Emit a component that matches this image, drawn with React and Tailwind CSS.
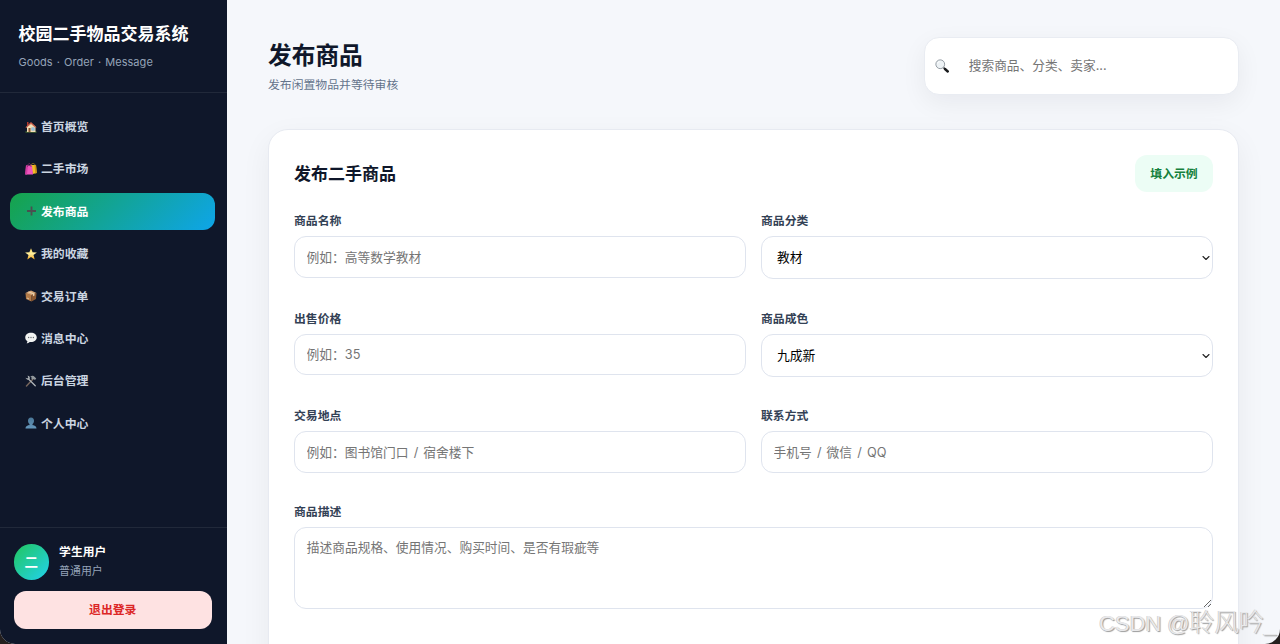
import React from "react";
import { ChevronDown } from "lucide-react";

function House() {
  return (
    <svg viewBox="0 0 24 24" className="h-3 w-3 shrink-0">
      <path d="M1 21h22v2H1z" fill="#5f8a35" />
      <path d="M4 11 12 4l9 7v11H4z" fill="#f3dfb6" />
      <path d="M4 2h3v7H4z" fill="#b5382c" />
      <path d="M1 12.500 12 2l11 10.500-1.500 1.500L12 6 2.500 14z" fill="#c9604c" />
      <path d="M7 14h4v8H7z" fill="#8a5330" />
      <path d="M13 13h6v6h-6z" fill="#5d9fcf" />
      <path d="M16 13v6M13 16h6" stroke="#fff" strokeWidth=".8" />
    </svg>
  );
}

function Bags() {
  return (
    <svg viewBox="0 0 24 24" className="h-3 w-3 shrink-0">
      <path d="M12 5c0-5 8-6 8 0" fill="none" stroke="#a58322" strokeWidth="1.500" />
      <path d="M11 4h11l1.500 16-8 2z" fill="#f3bd27" />
      <path d="m19 4 3 0 1.500 16-3 1z" fill="#ce9415" />
      <path d="M2 5h12l2 18H.5z" fill="#ef55bd" />
      <path d="M2 5h4L4 23H.5z" fill="#d23ba1" />
      <path d="M5 8c0-9 7-9 7 0" fill="none" stroke="#8c286d" strokeWidth="1.500" />
    </svg>
  );
}

function Plus() {
  return (
    <svg viewBox="0 0 24 24" className="h-3 w-3 shrink-0">
      <path d="M13 3v18M4 12h18" stroke="#4a4f50" strokeWidth="3.600" />
    </svg>
  );
}

function Star() {
  return (
    <svg viewBox="0 0 24 24" className="h-3 w-3 shrink-0">
      <defs>
        <linearGradient id="star" x1="0" y1="0" x2="0" y2="1">
          <stop offset="0" stopColor="#ffd95a" />
          <stop offset=".5" stopColor="#fff0a0" />
          <stop offset="1" stopColor="#f5a51b" />
        </linearGradient>
      </defs>
      <path d="m12 .3 3.200 8.100 8.600.4-6.800 5.400 2.400 8.600L12 18l-7.400 4.800L7 14.200.2 8.800l8.600-.4z" fill="url(#star)" />
    </svg>
  );
}

function Package() {
  return (
    <svg viewBox="0 0 24 24" className="h-3 w-3 shrink-0">
      <path d="m1 6 11-5 11 5-11 5z" fill="#d5a474" />
      <path d="m1 6 12 4v13L2 18z" fill="#b27a48" />
      <path d="m23 6-10 4v13l9-5z" fill="#8c5932" />
      <path d="m5 4 11 4.500v4l3-1.500V7L8 3z" fill="#e9cfac" />
      <path d="m4 15 4 2v2l-4-2z" fill="#dcc29f" />
    </svg>
  );
}

function Speech() {
  return (
    <svg viewBox="0 0 24 24" className="h-3 w-3 shrink-0">
      <path d="M12 1.500C5.500 1.500.5 5.500.5 11c0 3.200 1.700 5.800 4.300 7.300.1 1.700-.9 3-1.900 4.200 2.500 0 5-1 6.500-2.600 8 1 14.100-3 14.100-8.900 0-5.500-5-9.500-11.500-9.500z" fill="#f1f3f2" />
      <circle cx="7.300" cy="11" r="1.300" fill="#5f6669" />
      <circle cx="12" cy="11" r="1.300" fill="#5f6669" />
      <circle cx="16.700" cy="11" r="1.300" fill="#5f6669" />
    </svg>
  );
}

function Tools() {
  return (
    <svg viewBox="0 0 24 24" className="h-3 w-3 shrink-0">
      <path d="M15.500 8.500 3 22" stroke="#75655c" strokeWidth="3" strokeLinecap="round" />
      <path d="m7 8 13.500 13.500" stroke="#aeb3b7" strokeWidth="2.600" strokeLinecap="round" />
      <path d="M1 5.500 4.500 7 6.500 5 5 1.500c3-.5 5.500 2 4.500 5.500S4 11 1 5.500z" fill="#a8adb1" />
      <path d="M10.500 3.500C14 .5 17 1 19 3.500l3.500 3.500-2.500 3-3-2-2 1.500-2.500-2.500 1-2z" fill="#92989c" />
    </svg>
  );
}

function Person() {
  return (
    <svg viewBox="0 0 24 24" className="h-3 w-3 shrink-0">
      <defs>
        <linearGradient id="person" x1="0" y1="0" x2="0" y2="1">
          <stop offset="0" stopColor="#4b7898" />
          <stop offset="1" stopColor="#6598bd" />
        </linearGradient>
      </defs>
      <path d="M12 1c4 0 6 2.500 6 6.500 0 3-1.300 5.500-3 6.700v2c3 1 7.500 1.500 8 6.800H1c.5-5.300 5-5.800 8-6.800v-2c-1.700-1.200-3-3.700-3-6.700C6 3.500 8 1 12 1z" fill="url(#person)" />
    </svg>
  );
}

function Magnifier() {
  return (
    <svg viewBox="0 0 28 28" className="h-3.5 w-3.5 shrink-0">
      <path d="m17 17 3 3" stroke="#34383c" strokeWidth="3.500" />
      <path d="m20 20 5.500 5" stroke="#17191b" strokeWidth="4.800" strokeLinecap="round" />
      <circle cx="10.500" cy="10.500" r="8.800" fill="#edf2f5" stroke="#7d878f" strokeWidth="1.600" />
      <path d="M5 9c.5-2.500 2-4 4.500-4.300" fill="none" stroke="#fff" strokeWidth="1.500" />
    </svg>
  );
}

const navItems = [
  { label: "首页概览", Icon: House },
  { label: "二手市场", Icon: Bags },
  { label: "发布商品", Icon: Plus, active: true },
  { label: "我的收藏", Icon: Star },
  { label: "交易订单", Icon: Package },
  { label: "消息中心", Icon: Speech },
  { label: "后台管理", Icon: Tools },
  { label: "个人中心", Icon: Person },
];

function Sidebar() {
  return (
    <aside className="flex w-[227px] shrink-0 flex-col bg-[#0f172a]">
      <header className="h-[93px] border-b border-white/8 pt-[22px] pl-[18.5px]">
        <h1 className="text-[17px] leading-6 font-bold text-white">校园二手物品交易系统</h1>
        <p className="mt-2 text-[11px] leading-4 tracking-[0.05px] [word-spacing:0.9px] text-[#94a3b8]">Goods · Order · Message</p>
      </header>
      <nav className="flex flex-1 flex-col gap-[5.2px] pt-[15px] pr-3 pl-2.5">
        {navItems.map(({ label, Icon, active }) => (
          <a
            key={label}
            className={
              active
                ? "flex h-[37.2px] items-center gap-[3.5px] rounded-xl bg-linear-135/srgb from-[#16a34a] to-[#0ea5e9] pl-[15.4px] text-[11.9px] font-bold text-white"
                : "flex h-[37.2px] items-center gap-[3.5px] rounded-xl pl-[15.4px] text-[11.9px] font-bold text-[#cbd5e1]"
            }
          >
            <Icon />
            <span className="pt-[0.8px]">{label}</span>
          </a>
        ))}
      </nav>
      <footer className="h-[117px] border-t border-white/8 pt-[15.5px] pr-[15px] pl-[13.5px]">
        <div className="flex items-center gap-2.5">
          <div className="flex size-[35.6px] items-center justify-center rounded-full bg-linear-135/srgb from-[#22c55e] to-[#22d3ee] text-[13.5px] font-bold text-white">
            二
          </div>
          <div>
            <p className="text-[11.8px] leading-[19px] font-bold text-white">学生用户</p>
            <p className="text-[10.9px] leading-[19px] text-[#94a3b8]">普通用户</p>
          </div>
        </div>
        <button className="mt-[10.4px] block h-[37.4px] w-full rounded-xl bg-[#fee2e2] pt-0.5 text-[11.85px] font-bold text-[#dc2626]">
          退出登录
        </button>
      </footer>
    </aside>
  );
}

function Label({ children }) {
  return <span className="mb-[6.2px] block pt-[0.3px] text-[11.85px] leading-[17px] font-bold text-[#334155]">{children}</span>;
}

function TextField({ label, placeholder }) {
  return (
    <label className="block">
      <Label>{label}</Label>
      <input
        placeholder={placeholder}
        className="block h-[41.5px] w-full rounded-xl border border-[#dfe4ee] bg-white px-[11.6px] text-[12.75px] [word-spacing:1.5px] placeholder:text-[#757575]"
      />
    </label>
  );
}

function SelectField({ label, value }) {
  return (
    <label className="block">
      <Label>{label}</Label>
      <span className="relative block">
        <select className="block h-[43px] w-full appearance-none rounded-xl border border-[#dfe4ee] bg-white px-[15px] text-[12.75px] text-black">
          <option>{value}</option>
        </select>
        <ChevronDown className="absolute top-[16px] right-[1px] size-3 text-[#222222]" strokeWidth={2.2} />
      </span>
    </label>
  );
}

export default function App() {
  return (
    <div className="relative h-[644px] w-[1280px] overflow-hidden bg-[#241f1e] font-['Inter','Noto_Sans_CJK_SC',sans-serif]">
      <div className="flex h-[643.5px] overflow-hidden rounded-b-[15px] bg-[#f5f7fb]">
        <Sidebar />
        <main className="flex min-w-0 flex-1 flex-col pt-[37px] pr-[41px] pl-[41px]">
          <header className="flex h-[92px] shrink-0 items-start justify-between">
            <div className="pt-px">
              <h2 className="text-[23.7px] leading-[36px] font-bold text-[#0f172a]">发布商品</h2>
              <p className="mt-[2.4px] text-[11.85px] leading-[18px] text-[#64748b]">发布闲置物品并等待审核</p>
            </div>
            <div className="flex h-[58px] w-[315px] items-center rounded-[15px] border border-[#e9ecf2] bg-white pl-[9.5px] shadow-[0_8px_26px_rgba(15,23,42,0.06)]">
              <Magnifier />
              <input
                placeholder="搜索商品、分类、卖家..."
                className="ml-[20.3px] min-w-0 flex-1 bg-transparent text-[12.7px] placeholder:text-[#757575]"
              />
            </div>
          </header>
          <section className="h-[640px] shrink-0 rounded-[20px] border border-[#e7eaf1] bg-white px-[25px] pt-[25px] shadow-[0_10px_30px_rgba(15,23,42,0.06)]">
            <div className="flex h-[37px] items-center justify-between">
              <h3 className="pt-[2.5px] text-[17px] font-bold text-[#0f172a]">发布二手商品</h3>
              <button className="h-[37px] w-[78px] rounded-xl bg-[#ecfdf5] pt-0.5 text-[11.85px] font-bold text-[#15803d]">填入示例</button>
            </div>
            <form className="mt-[20.9px] grid grid-cols-2 gap-x-[15px] gap-y-[31px]">
              <TextField label="商品名称" placeholder="例如：高等数学教材" />
              <SelectField label="商品分类" value="教材" />
              <TextField label="出售价格" placeholder="例如：35" />
              <SelectField label="商品成色" value="九成新" />
              <TextField label="交易地点" placeholder="例如：图书馆门口 / 宿舍楼下" />
              <TextField label="联系方式" placeholder="手机号 / 微信 / QQ" />
              <label className="col-span-2 block">
                <Label>商品描述</Label>
                <textarea
                  placeholder="描述商品规格、使用情况、购买时间、是否有瑕疵等"
                  className="block h-[81.4px] w-full resize rounded-xl border border-[#dfe4ee] bg-white px-[11.8px] pt-[9.5px] text-[12.72px] leading-[20px] placeholder:text-[#757575]"
                />
              </label>
            </form>
          </section>
        </main>
      </div>
      <div className="absolute top-[602px] left-[1099px] flex items-baseline leading-[36px] whitespace-nowrap text-[#e9e9eb] [text-shadow:1px_1px_1px_#9a9a9a,-0.5px_-0.5px_0.5px_#c4c4c4]">
        <span className="font-['Liberation_Sans',sans-serif] text-[22.2px] tracking-[-0.2px]">CSDN @</span>
        <span className="font-['Noto_Sans_CJK_SC',sans-serif] text-[24.8px] font-light">聆风吟</span>
        <span className="font-['Liberation_Sans',sans-serif] text-[22px]">_</span>
      </div>
    </div>
  );
}
